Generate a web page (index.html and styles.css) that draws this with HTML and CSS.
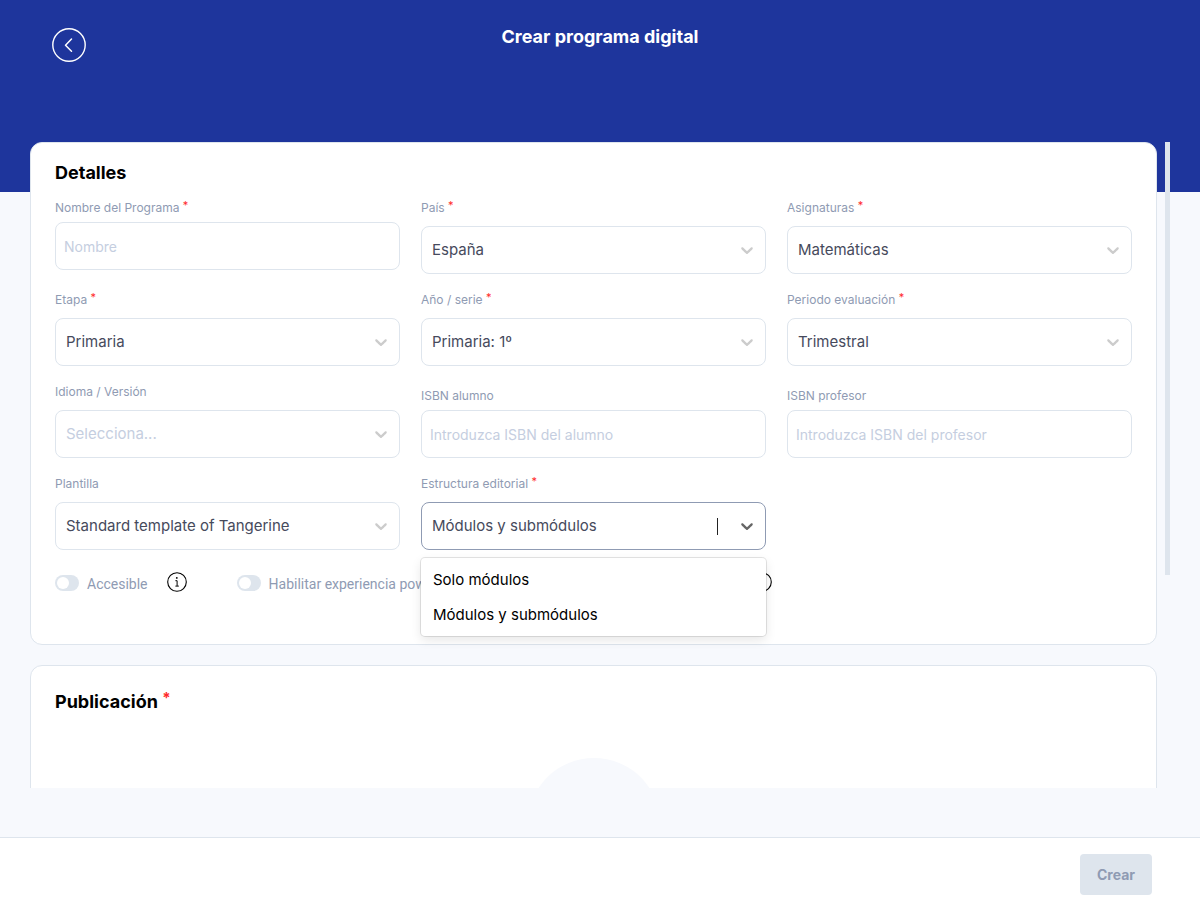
FILE: index.html
```html
<!DOCTYPE html>
<html lang="es">
  <head>
    <meta charset="UTF-8" />
    <meta name="viewport" content="width=device-width, initial-scale=1" />
    <title>Crear programa digital</title>
    <link rel="stylesheet" href="styles.css">
  </head>
  <body>
    <!-- Shared icons -->
    <svg class="sprite" aria-hidden="true">
      <symbol id="chevron" viewBox="0 0 20 20">
        <path d="M4.516 7.548c0.436-0.446 1.043-0.481 1.576 0l3.908 3.747 3.908-3.747c0.533-0.481 1.141-0.446 1.574 0 0.436 0.445 0.408 1.197 0 1.615-0.406 0.418-4.695 4.502-4.695 4.502-0.217 0.223-0.502 0.335-0.787 0.335s-0.57-0.112-0.789-0.335c0 0-4.287-4.084-4.695-4.502s-0.436-1.17 0-1.615z" fill="currentColor" />
      </symbol>
      <symbol id="info" viewBox="0 0 20 20">
        <circle cx="10" cy="10" r="9.3" fill="none" stroke="currentColor" stroke-width="1.1" />
        <circle cx="9.8" cy="5.9" r="0.9" fill="currentColor" />
        <path d="M8.4 8.7h1.7v5.2M8.4 14.1h3.4" fill="none" stroke="currentColor" stroke-width="1" />
      </symbol>
    </svg>

    <header class="header">
      <button class="back" type="button" aria-label="Volver">
        <svg width="34" height="34" viewBox="0 0 34 34" fill="none" stroke="currentColor">
          <circle cx="17" cy="17" r="16.2" stroke-width="1.4" />
          <path d="M19.5 11l-6 6.2 6 6" stroke-width="1.5" stroke-linecap="round" stroke-linejoin="round" />
        </svg>
      </button>
      <h1>Crear programa digital</h1>
    </header>

    <main class="main">
      <form class="content" id="programa">
        <section class="card">
          <h2>Detalles</h2>
          <div class="grid">
            <div class="field field-text">
              <label for="nombre">Nombre del Programa <span class="required">*</span></label>
              <input id="nombre" type="text" placeholder="Nombre">
            </div>
            <div class="field">
              <label for="pais">País <span class="required">*</span></label>
              <div class="select">
                <select id="pais"><option>España</option></select>
                <svg class="chevron"><use href="#chevron" /></svg>
              </div>
            </div>
            <div class="field">
              <label for="asignaturas">Asignaturas <span class="required">*</span></label>
              <div class="select">
                <select id="asignaturas"><option>Matemáticas</option></select>
                <svg class="chevron"><use href="#chevron" /></svg>
              </div>
            </div>

            <div class="field">
              <label for="etapa">Etapa <span class="required">*</span></label>
              <div class="select">
                <select id="etapa"><option>Primaria</option></select>
                <svg class="chevron"><use href="#chevron" /></svg>
              </div>
            </div>
            <div class="field">
              <label for="serie">Año / serie <span class="required">*</span></label>
              <div class="select">
                <select id="serie"><option>Primaria: 1º</option></select>
                <svg class="chevron"><use href="#chevron" /></svg>
              </div>
            </div>
            <div class="field">
              <label for="periodo">Periodo evaluación <span class="required">*</span></label>
              <div class="select">
                <select id="periodo"><option>Trimestral</option></select>
                <svg class="chevron"><use href="#chevron" /></svg>
              </div>
            </div>

            <div class="field">
              <label for="idioma">Idioma / Versión</label>
              <div class="select select-empty">
                <select id="idioma"><option value="">Selecciona...</option></select>
                <svg class="chevron"><use href="#chevron" /></svg>
              </div>
            </div>
            <div class="field field-text field-bottom">
              <label for="isbn-alumno">ISBN alumno</label>
              <input id="isbn-alumno" type="text" placeholder="Introduzca ISBN del alumno">
            </div>
            <div class="field field-text field-bottom">
              <label for="isbn-profesor">ISBN profesor</label>
              <input id="isbn-profesor" type="text" placeholder="Introduzca ISBN del profesor">
            </div>

            <div class="field">
              <label for="plantilla">Plantilla</label>
              <div class="select">
                <select id="plantilla"><option>Standard template of Tangerine</option></select>
                <svg class="chevron"><use href="#chevron" /></svg>
              </div>
            </div>
            <div class="field">
              <label for="estructura">Estructura editorial <span class="required">*</span></label>
              <div class="select select-open">
                <select id="estructura"><option>Módulos y submódulos</option></select>
                <span class="caret"></span>
                <svg class="chevron"><use href="#chevron" /></svg>
                <div class="menu">
                  <button type="button">Solo módulos</button>
                  <button type="button">Módulos y submódulos</button>
                </div>
              </div>
            </div>
          </div>

          <div class="toggles">
            <div class="toggle">
              <input id="accesible" type="checkbox">
              <label for="accesible">Accesible</label>
              <svg class="info"><use href="#info" /></svg>
            </div>
            <div class="toggle toggle-wide">
              <input id="experiencia" type="checkbox">
              <label for="experiencia">Habilitar experiencia pow</label>
              <svg class="info"><use href="#info" /></svg>
            </div>
          </div>
        </section>

        <section class="card card-publish">
          <h2>Publicación <span class="required">*</span></h2>
          <div class="cover"></div>
        </section>
      </form>
      <div class="scrollbar"><div class="thumb"></div></div>
    </main>

    <footer class="footer">
      <button class="submit" type="submit" form="programa" disabled>Crear</button>
    </footer>
  </body>
</html>
```
FILE: styles.css
```css
* {
  box-sizing: border-box;
}
body {
  display: flex;
  flex-direction: column;
  height: 100vh;
  margin: 0;
  background: #f7f9fd;
  font-family: Inter, 'Liberation Sans', sans-serif;
  color: #000;
}
button,
input,
select {
  font-family: inherit;
}
.sprite {
  position: absolute;
  width: 0;
  height: 0;
}

/* Header */
.header {
  display: grid;
  grid-template-columns: 1fr auto 1fr;
  align-items: start;
  flex: none;
  height: 192px;
  padding: 24px 52px;
  background: #1e359c;
  color: #fff;
}
.header h1 {
  margin: 0;
  font-size: 18px;
  font-weight: 700;
  line-height: 26px;
}
.back {
  width: 34px;
  height: 34px;
  margin-top: 4px;
  padding: 0;
  border: none;
  background: none;
  color: inherit;
  cursor: pointer;
}
.back svg {
  display: block;
}

/* Scrolling content */
.main {
  display: flex;
  flex: 1;
  gap: 8px;
  min-height: 0;
  margin-top: -50px;
  padding: 0 30px 49px;
}
.content {
  flex: 1;
  overflow: hidden;
}
.scrollbar {
  width: 5px;
}
.thumb {
  height: 67%;
  background: #dee5ed;
}
.card {
  padding: 17px 24px 50px;
  border: 1px solid #dee5ed;
  border-radius: 12px;
  background: #fff;
}
.card h2 {
  margin: 0;
  font-size: 18px;
  font-weight: 700;
  line-height: 26px;
}
.card + .card {
  margin-top: 20px;
}
.card-publish {
  padding-top: 23px;
}
.cover {
  width: 132px;
  height: 132px;
  margin: 43px auto 0;
  border-radius: 50%;
  background: #f7f9fd;
}

/* Fields */
.grid {
  display: grid;
  grid-template-columns: repeat(3, 1fr);
  gap: 17px 21px;
  margin-top: 13px;
}
.field {
  display: flex;
  flex-direction: column;
  gap: 9px;
}
.field-text {
  gap: 5px;
}
.field-bottom {
  align-self: end;
}
.field label {
  font-size: 12px;
  line-height: 18px;
  color: #8f9bb3;
}
.required {
  position: relative;
  top: -3px;
  font-size: 11px;
  line-height: 1;
  color: #ff2a2a;
}
.card h2 .required {
  top: -5px;
  font-size: 15px;
}
.field input,
.select select {
  width: 100%;
  height: 48px;
  border: 1px solid #dee5ed;
  border-radius: 8px;
  background: #fff;
  color: #464a5c;
}
.field input {
  padding: 1px 8px 0;
  font-size: 14px;
}
.field input::placeholder {
  color: #c5cee0;
}
.select {
  position: relative;
}
.select select {
  appearance: none;
  padding: 0 40px 2px 10px;
  font-size: 15px;
}
.chevron {
  position: absolute;
  top: 14px;
  right: 9px;
  width: 20px;
  height: 20px;
  color: #ccc;
  pointer-events: none;
}
.select-empty select {
  color: #c5cee0;
}
.select-open select {
  border-color: #8f9bb3;
}
.select-open .chevron {
  color: #666;
}
.caret {
  position: absolute;
  top: 16px;
  right: 48px;
  width: 1px;
  height: 17px;
  background: #222;
}
.menu {
  position: absolute;
  top: 56px;
  left: 0;
  right: 0;
  z-index: 1;
  padding: 4px 0;
  border-radius: 4px;
  background: #fff;
  box-shadow: 0 0 0 1px rgba(0, 0, 0, 0.1), 0 4px 11px rgba(0, 0, 0, 0.1);
}
.menu button {
  display: block;
  width: 100%;
  height: 35px;
  padding: 0 12px;
  border: none;
  background: none;
  font-size: 15px;
  text-align: left;
  color: #000;
  cursor: pointer;
}

/* Toggles */
.toggles {
  display: flex;
  gap: 50px;
  margin-top: 22px;
}
.toggle {
  display: flex;
  align-items: center;
  gap: 8px;
}
.toggle input {
  appearance: none;
  width: 24px;
  height: 16px;
  margin: 0;
  padding: 2px;
  border-radius: 8px;
  background: #dee5ed;
  cursor: pointer;
}
.toggle input::before {
  content: '';
  display: block;
  width: 12px;
  height: 12px;
  border-radius: 50%;
  background: #fff;
}
.toggle label {
  padding-top: 2px;
  font-family: Roboto, sans-serif;
  font-size: 14px;
  line-height: 20px;
  color: #8f9bb3;
}
.toggle-wide {
  width: 535px;
}
.info {
  align-self: flex-start;
  width: 20px;
  height: 20px;
  margin-left: auto;
}
.toggle:first-child label {
  margin-right: 11px;
}

/* Footer */
.footer {
  display: flex;
  flex: none;
  justify-content: flex-end;
  padding: 16px 48px 15px;
  border-top: 1px solid #dee5ed;
  background: #fff;
}
.submit {
  width: 72px;
  height: 41px;
  border: none;
  border-radius: 4px;
  background: #dee5ed;
  font-size: 14px;
  font-weight: 700;
  color: #8f9bb3;
}
```
